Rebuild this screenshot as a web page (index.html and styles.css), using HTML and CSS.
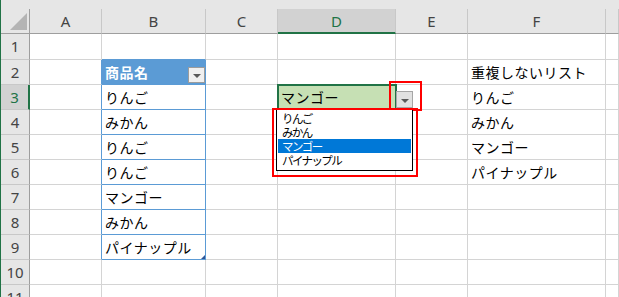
FILE: index.html
```html
<!DOCTYPE html>
<html lang="ja">
<head>
    <meta charset="UTF-8">
    <meta name="viewport" content="width=device-width, initial-scale=1.0">
    <title>重複しないリスト</title>
    <link rel="stylesheet" href="styles.css">
</head>
<body>
    <div class="sheet">
        <div class="grid">
            <!-- column headers -->
            <div class="corner"><span class="tri"></span></div>
            <div class="hd">A</div>
            <div class="hd">B</div>
            <div class="hd">C</div>
            <div class="hd sel">D</div>
            <div class="hd">E</div>
            <div class="hd">F</div>
            <div class="hd"></div>

            <!-- row 1 -->
            <div class="rh">1</div>
            <div class="c"></div>
            <div class="c tt"></div>
            <div class="c"></div>
            <div class="c"></div>
            <div class="c"></div>
            <div class="c"></div>
            <div class="c"></div>

            <!-- row 2 -->
            <div class="rh">2</div>
            <div class="c tl"></div>
            <div class="c tb th">商品名<span class="filter"></span></div>
            <div class="c"></div>
            <div class="c"></div>
            <div class="c"></div>
            <div class="c">重複しないリスト</div>
            <div class="c"></div>

            <!-- row 3 -->
            <div class="rh sel">3</div>
            <div class="c tl"></div>
            <div class="c tb">りんご</div>
            <div class="c"></div>
            <div class="c cur">マンゴー
                <span class="mark mark-btn"></span>
                <span class="dd-btn"></span>
                <div class="dd-list">
                    <div>りんご</div>
                    <div>みかん</div>
                    <div class="on">マンゴー</div>
                    <div>パイナップル</div>
                </div>
                <span class="mark mark-list"></span>
            </div>
            <div class="c"></div>
            <div class="c">りんご</div>
            <div class="c"></div>

            <!-- row 4 -->
            <div class="rh">4</div>
            <div class="c tl"></div>
            <div class="c tb">みかん</div>
            <div class="c"></div>
            <div class="c"></div>
            <div class="c"></div>
            <div class="c">みかん</div>
            <div class="c"></div>

            <!-- row 5 -->
            <div class="rh">5</div>
            <div class="c tl"></div>
            <div class="c tb">りんご</div>
            <div class="c"></div>
            <div class="c"></div>
            <div class="c"></div>
            <div class="c">マンゴー</div>
            <div class="c"></div>

            <!-- row 6 -->
            <div class="rh">6</div>
            <div class="c tl"></div>
            <div class="c tb">りんご</div>
            <div class="c"></div>
            <div class="c"></div>
            <div class="c"></div>
            <div class="c">パイナップル</div>
            <div class="c"></div>

            <!-- row 7 -->
            <div class="rh">7</div>
            <div class="c tl"></div>
            <div class="c tb">マンゴー</div>
            <div class="c"></div>
            <div class="c"></div>
            <div class="c"></div>
            <div class="c"></div>
            <div class="c"></div>

            <!-- row 8 -->
            <div class="rh">8</div>
            <div class="c tl"></div>
            <div class="c tb">みかん</div>
            <div class="c"></div>
            <div class="c"></div>
            <div class="c"></div>
            <div class="c"></div>
            <div class="c"></div>

            <!-- row 9 -->
            <div class="rh">9</div>
            <div class="c tl"></div>
            <div class="c tb last">パイナップル</div>
            <div class="c"></div>
            <div class="c"></div>
            <div class="c"></div>
            <div class="c"></div>
            <div class="c"></div>

            <!-- row 10 -->
            <div class="rh">10</div>
            <div class="c"></div>
            <div class="c"></div>
            <div class="c"></div>
            <div class="c"></div>
            <div class="c"></div>
            <div class="c"></div>
            <div class="c"></div>

            <!-- row 11 -->
            <div class="rh">11</div>
            <div class="c"></div>
            <div class="c"></div>
            <div class="c"></div>
            <div class="c"></div>
            <div class="c"></div>
            <div class="c"></div>
            <div class="c"></div>
        </div>
    </div>
</body>
</html>
```

FILE: styles.css
```css
* {
  box-sizing: border-box;
}

body {
  margin: 0;
  background: #fff;
  overflow: hidden;
  font-family: "Noto Sans CJK JP", "Noto Sans", sans-serif;
}

.sheet {
  border-left: 1px solid #217346;
  padding-top: 9px;
  background: #e6e6e6;
  height: 297px;
  overflow: hidden;
}

.grid {
  display: grid;
  grid-template-columns: 29px 72px 104px 72px 118px 72px 138px 1fr;
  grid-template-rows: 25px 26px repeat(10, 25px);
  background: #fff;
}

/* headers */
.corner {
  background: #e6e6e6;
  border-right: 1px solid #9e9e9e;
  border-bottom: 1px solid #9e9e9e;
  position: relative;
}

.tri {
  position: absolute;
  right: 2px;
  bottom: 3px;
  width: 0;
  height: 0;
  border-left: 17px solid transparent;
  border-bottom: 17px solid #b4b4b4;
}

.hd {
  background: #e6e6e6;
  border-right: 1px solid #c8c8c8;
  border-bottom: 1px solid #9e9e9e;
  text-align: center;
  font-family: "Noto Sans", sans-serif;
  font-size: 15px;
  line-height: 24px;
  color: #444;
}

.hd.sel {
  background: #d2d2d2;
  border-bottom: 2px solid #217346;
  color: #217346;
}

.rh {
  background: #e6e6e6;
  border-right: 1px solid #9e9e9e;
  border-bottom: 1px solid #c8c8c8;
  text-align: center;
  font-family: "Noto Sans", sans-serif;
  font-size: 15px;
  line-height: 24px;
  color: #444;
}

.rh.sel {
  background: #d2d2d2;
  border-right: 2px solid #217346;
  color: #217346;
}

/* cells */
.c {
  border-right: 1px solid #d4d4d4;
  border-bottom: 1px solid #d4d4d4;
  padding: 0 3px;
  font-size: 14px;
  letter-spacing: 0.5px;
  line-height: 24px;
  white-space: nowrap;
  color: #000;
}

/* table B2:B9 */
.tl {
  border-right-color: #5b9bd5;
}

.tt {
  border-bottom-color: #5b9bd5;
}

.tb {
  border-right-color: #5b9bd5;
  border-bottom-color: #5b9bd5;
}

.th {
  background: #5b9bd5;
  color: #fff;
  font-weight: bold;
  display: flex;
  justify-content: space-between;
}

.filter {
  align-self: flex-end;
  width: 17px;
  height: 16px;
  margin: 0 -3px 1px 0;
  border: 1px solid #9c9c9c;
  background: #f0f0f0;
  display: flex;
  align-items: center;
  justify-content: center;
}

.filter::after,
.dd-btn::after {
  content: "";
  width: 0;
  height: 0;
  margin-top: 2px;
  border-left: 4px solid transparent;
  border-right: 4px solid transparent;
  border-top: 4px solid #595959;
}

.last {
  position: relative;
}

.last::after {
  content: "";
  position: absolute;
  right: 0;
  bottom: 0;
  border-left: 4px solid transparent;
  border-bottom: 4px solid #2f5597;
}

/* active cell with dropdown */
.cur {
  background: #c6e0b4;
  outline: 2px solid #217346;
  outline-offset: -1px;
  position: relative;
  z-index: 2;
}

.dd-btn {
  position: absolute;
  left: 118px;
  top: 6px;
  width: 17px;
  height: 17px;
  border: 1px solid #a6a6a6;
  background: #e1e1e1;
  display: flex;
  align-items: center;
  justify-content: center;
}

.dd-list {
  position: absolute;
  left: -2px;
  top: 24px;
  width: 137px;
  height: 62px;
  padding: 1px 1px 0;
  background: #fff;
  border: 1px solid #000;
  font-size: 11.5px;
  letter-spacing: -1.6px;
  line-height: 14px;
}

.dd-list div {
  height: 14px;
  padding-left: 4px;
  overflow: hidden;
}

.dd-list .on {
  background: #0078d7;
  color: #fff;
}

.mark {
  position: absolute;
  border: 2px solid #ff0000;
}

.mark-btn {
  left: 111px;
  top: -4px;
  width: 33px;
  height: 30px;
}

.mark-list {
  left: -6px;
  top: 23px;
  width: 146px;
  height: 69px;
}
```
